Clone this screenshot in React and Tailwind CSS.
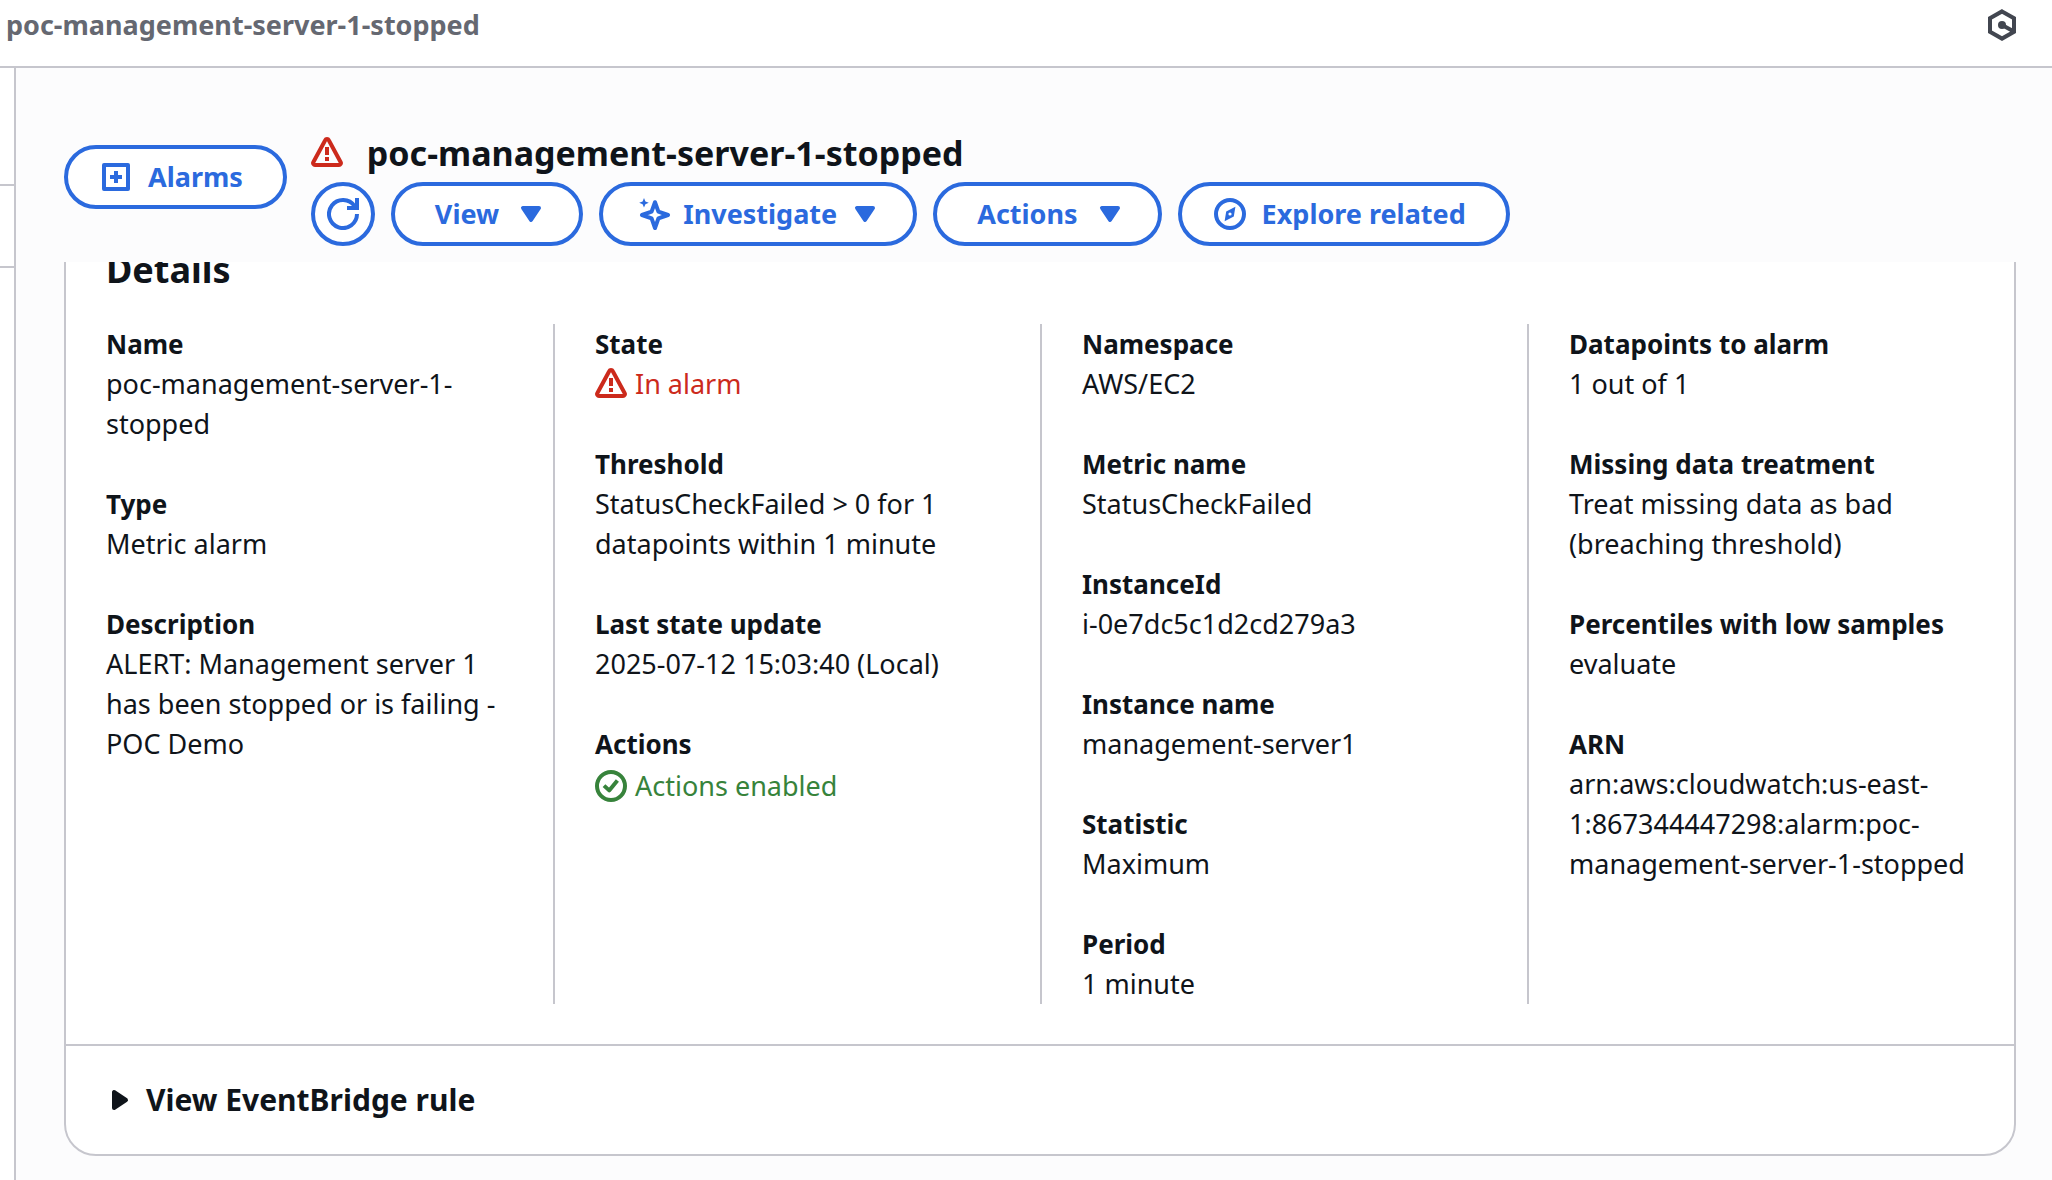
const svgProps = { viewBox: '0 0 16 16', fill: 'none', stroke: 'currentColor', strokeWidth: 2, 'aria-hidden': true };

function WarningIcon() {
  return (
    <svg {...svgProps} className="size-8 shrink-0">
      <path d="M7.1 1.6a1 1 0 0 1 1.8 0l5.95 11a.95.95 0 0 1-.85 1.4H2a.95.95 0 0 1-.85-1.4z" strokeLinejoin="round" />
      <path d="M8 5v4M8 10v2" />
    </svg>
  );
}

function CheckIcon() {
  return (
    <svg {...svgProps} className="size-8 shrink-0">
      <circle cx="8" cy="8" r="7" />
      <path d="m4.5 7.8 2.6 2.4 4.1-5" strokeLinejoin="round" />
    </svg>
  );
}

function AddPanelIcon() {
  return (
    <svg {...svgProps} className="size-8 shrink-0">
      <path d="M2 2h12v12H2z" strokeLinejoin="round" />
      <path d="M8 5v6M5 8h6" />
    </svg>
  );
}

function RefreshIcon() {
  return (
    <svg {...svgProps} className="size-8 shrink-0">
      <path d="M15 8a7 7 0 1 1-1.2-3.9" />
      <path d="M10 5h5V0" />
    </svg>
  );
}

function SparkleIcon() {
  return (
    <svg {...svgProps} className="size-8 shrink-0">
      <path d="M8 2.1 9.7 6.8l4.8 1.7-4.8 1.7L8 15l-1.7-4.8L1.5 8.500l4.8-1.7z" strokeLinejoin="round" />
      <path d="M2.500 0l.7 1.700 1.700.7-1.700.7-.7 1.700-.7-1.700L.1 2.400l1.700-.7z" fill="currentColor" stroke="none" />
    </svg>
  );
}

function CompassIcon() {
  return (
    <svg {...svgProps} className="size-8 shrink-0">
      <circle cx="8" cy="8" r="7" />
      <path
        d="M10.7 4.4 9.900 9.200 5.300 11.600 6.100 6.800zM8 7.200a.8.8 0 1 0 0 1.600.8.8 0 0 0 0-1.600z"
        fill="currentColor"
        fillRule="evenodd"
        stroke="none"
      />
    </svg>
  );
}

function HexagonIcon() {
  return (
    <svg {...svgProps} className="size-8 shrink-0">
      <path d="M8 1.200 14 4.600v6.800l-6 3.400-6-3.400V4.600zM8 8l5.500 3" />
      <circle cx="8" cy="8" r="2" fill="currentColor" stroke="none" />
    </svg>
  );
}

function CaretDown() {
  return (
    <svg {...svgProps} className="size-8 shrink-0">
      <path d="M4 5h8l-4 6z" fill="currentColor" strokeLinejoin="round" />
    </svg>
  );
}

const pill =
  'flex h-16 shrink-0 items-center rounded-full border-4 border-[#2b6ade] bg-white text-[27px] leading-10 font-bold text-[#2b6ade] whitespace-nowrap';

function Field({ label, children }) {
  return (
    <div>
      <dt className="text-[26px] font-bold">{label}</dt>
      <dd>{children}</dd>
    </div>
  );
}

const columns = [
  [
    ['Name', 'poc-management-server-1-stopped'],
    ['Type', 'Metric alarm'],
    ['Description', 'ALERT: Management server 1 has been stopped or is failing - POC Demo'],
  ],
  [
    ['State', <span className="flex items-center gap-2 text-[#cc2a1c]"><WarningIcon />In alarm</span>],
    ['Threshold', 'StatusCheckFailed > 0 for 1 datapoints within 1 minute'],
    ['Last state update', '2025-07-12 15:03:40 (Local)'],
    ['Actions', <span className="flex h-11 items-center gap-2 text-[#37833b]"><CheckIcon />Actions enabled</span>],
  ],
  [
    ['Namespace', 'AWS/EC2'],
    ['Metric name', 'StatusCheckFailed'],
    ['InstanceId', 'i-0e7dc5c1d2cd279a3'],
    ['Instance name', 'management-server1'],
    ['Statistic', 'Maximum'],
    ['Period', '1 minute'],
  ],
  [
    ['Datapoints to alarm', '1 out of 1'],
    ['Missing data treatment', 'Treat missing data as bad (breaching threshold)'],
    ['Percentiles with low samples', 'evaluate'],
    ['ARN', 'arn:aws:cloudwatch:us-east-1:867344447298:alarm:poc-management-server-1-stopped'],
  ],
];

export default function App() {
  return (
    <div className="flex min-h-screen flex-col bg-white font-['Noto_Sans',sans-serif] text-[27px] leading-10 text-[#0f141a]">
      <header className="flex items-center justify-between border-b-2 border-[#c6c6cd] pt-[5px] pr-[34px] pb-[21px] pl-[6px]">
        <span className="font-bold text-[#656871]">poc-management-server-1-stopped</span>
        <button type="button" aria-label="Open tools" className="text-[#424650]">
          <HexagonIcon />
        </button>
      </header>

      <div className="flex grow">
        <aside className="w-4 shrink-0 border-r-2 border-[#c6c6cd] pt-[116px]">
          <div className="h-[84px] border-y-2 border-[#c6c6cd]" />
        </aside>

        <main className="min-w-0 grow bg-[#fcfcfd] pr-9 pb-6 pl-12">
          <div className="relative z-10 flex items-center gap-6 bg-[#fcfcfd] pt-10 pb-4">
            <button type="button" className={`${pill} gap-4 pr-10 pl-8`}>
              <AddPanelIcon />
              Alarms
            </button>
            <div>
              <div className="flex items-center gap-6 pt-[18px] pb-[2px]">
                <span className="text-[#cc2a1c]"><WarningIcon /></span>
                <h1 className="text-[34px] leading-[54px] font-bold">poc-management-server-1-stopped</h1>
              </div>
              <div className="flex flex-wrap gap-4">
                <button type="button" aria-label="Refresh" className={`${pill} w-16 justify-center`}>
                  <RefreshIcon />
                </button>
                <button type="button" className={`${pill} gap-4 pr-8 pl-10`}>
                  View
                  <CaretDown />
                </button>
                <button type="button" className={`${pill} gap-3 pr-8 pl-9`}>
                  <SparkleIcon />
                  Investigate
                  <CaretDown />
                </button>
                <button type="button" className={`${pill} gap-4 pr-8 pl-10`}>
                  Actions
                  <CaretDown />
                </button>
                <button type="button" className={`${pill} gap-4 pr-10 pl-8`}>
                  <CompassIcon />
                  Explore related
                </button>
              </div>
            </div>
          </div>

          <section className="-mt-10 rounded-[32px] border-2 border-[#c6c6cd] bg-white">
            <h2 className="px-10 pt-6 pb-8 text-[36px] leading-[44px] font-bold">Details</h2>
            <div className="grid grid-cols-4 pb-10">
              {columns.map((fields, i) => (
                <dl key={i} className="flex flex-col gap-10 border-[#c6c6cd] px-10 not-first:border-l-2">
                  {fields.map(([label, value]) => (
                    <Field key={label} label={label}>{value}</Field>
                  ))}
                </dl>
              ))}
            </div>
            <div className="border-t-2 border-[#c6c6cd] px-10 py-8">
              <button type="button" className="flex items-center gap-2 text-[30px] leading-[44px] font-bold">
                <svg {...svgProps} className="size-8 shrink-0">
                  <path d="M4 4v8l6-4z" fill="currentColor" strokeLinejoin="round" />
                </svg>
                View EventBridge rule
              </button>
            </div>
          </section>
        </main>
      </div>
    </div>
  );
}
